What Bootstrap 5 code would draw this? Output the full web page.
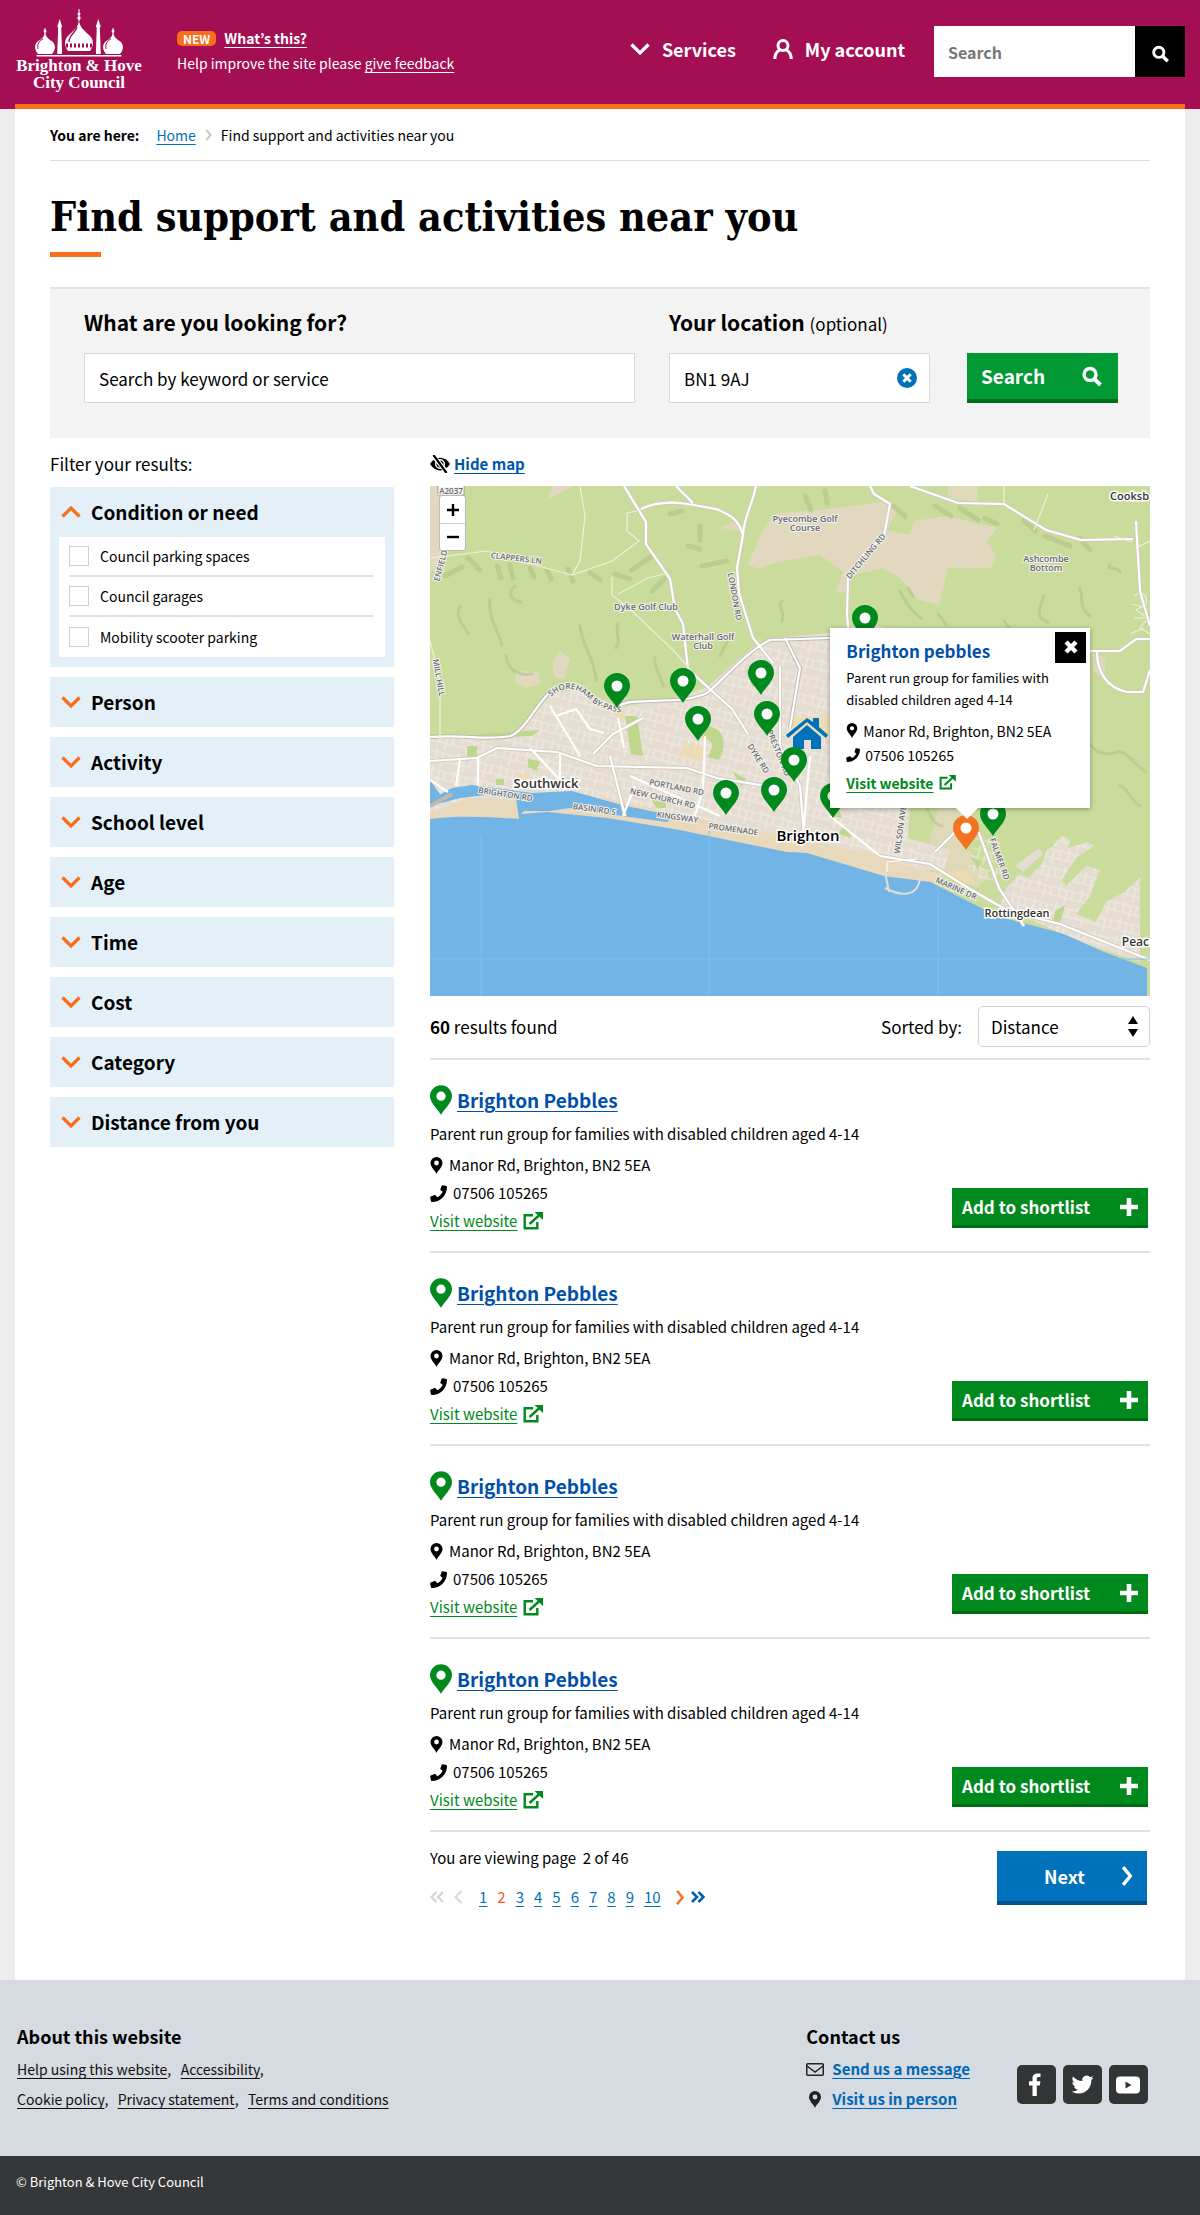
<!DOCTYPE html>
<html lang="en">
<head>
<meta charset="utf-8">
<meta name="viewport" content="width=device-width, initial-scale=1">
<title>Find support and activities near you - Brighton &amp; Hove City Council</title>
<link rel="stylesheet" href="https://cdn.jsdelivr.net/npm/bootstrap@5.3.0/dist/css/bootstrap.min.css">
<style>
:root{--brand:#a30f52;--orange:#f96e1a;--green:#00891c;--blue:#0071bb;--navy:#004fa8;--rule:#dcdcdc}
body{font-family:"Noto Sans CJK JP","Open Sans",sans-serif;font-size:17px;line-height:24px;color:#000;background:#ececec}
a{text-underline-offset:3px;text-decoration-thickness:1px}
svg{flex:none}
.fs-s{font-size:14px}.fs-m{font-size:15px}.fs-b{font-size:17px}.fs-l{font-size:18px}.fs-xl{font-size:21px}
.site-head{background:var(--brand);color:#fff;padding:9px 15px 0}
.site-head a{color:#fff}
.head-row{min-height:95px}
.head-bar{height:5px;background:var(--orange)}
.logo-link{width:128px;text-align:center;white-space:nowrap;text-decoration:none;font:700 17px/17px "Liberation Serif",serif}
.head-side{padding-top:17px}
.notice{margin-left:34px;line-height:25px}
.new-tag{background:var(--orange);border-radius:5px;font-size:12px;line-height:15px;padding:0 6px;font-weight:700}
.head-nav{gap:37px;padding-top:28px;margin-right:29px;line-height:24px}
.head-search input{width:201px;height:51px;border:0;border-radius:0;padding:0 14px;font-size:16px;font-weight:700}
.head-search input::placeholder{color:#777}
.head-search button{width:50px;background:#000;border:0;color:#fff}
.page{background:#fff;margin:0 15px;padding:0 35px 71px}
.crumbs{padding:14px 0 13px;border-bottom:1px solid var(--rule);gap:9px}
.crumbs a{color:var(--blue)}
h1{font:700 41px/56px "DejaVu Serif Condensed","DejaVu Serif",serif;margin:28px 0 0}
.title-bar{width:51px;height:5px;background:var(--orange);margin-top:7px}
.finder{margin-top:30px;background:#f3f3f3;border-top:2px solid #e1e1e1;padding:17px 32px 35px 34px;gap:34px}
.finder label{height:32px;line-height:32px;margin-bottom:15px;font-weight:700}
.finder .form-control{height:50px;border:1px solid #d9d9d9;border-radius:0;font-size:17px;color:#000;padding:0 14px}
.finder .form-control::placeholder{color:#000;opacity:1}
.col-key{flex:1 1 550px}.col-loc{flex:0 1 261px}
.clear-btn{position:absolute;right:13px;top:15px;border:0;background:none;padding:0;line-height:0}
.btn-find{width:151px;height:50px;background:#093;border:0;border-bottom:4px solid #006f1a;border-radius:0;color:#fff;font-weight:700;font-size:19px;padding:0 16px 0 14px;margin-left:3px}
.main-cols{padding-top:14px;gap:36px}
.side-col{flex:0 0 344px}
.side-title{margin-bottom:11px}
.panel{background:#e3f0f8;margin-bottom:10px;padding:0 9px}
.panel-btn{height:50px;border:0;background:none;padding:0 2px;font-weight:700;font-size:19px;gap:10px;width:100%;text-align:left}
.panel.open{padding-bottom:10px}
.checks{background:#fff;padding:0 12px 0 10px}
.check-line{height:40px;gap:11px;border-bottom:2px solid #e1e1e1}
.check-line:last-child{border:0}
.check-line .form-check-input{width:20px;height:20px;border:1px solid #d2d2d2;border-radius:0;margin:0}
.map-toggle{color:#0055a8;font-size:15px}
.map-box{margin-top:10px}
.map-box>svg{display:block;width:100%;height:auto}
.popup{position:absolute;left:55.6%;top:27.8%;width:260px;height:180px;background:#fff;padding:11px 16px;box-shadow:0 1px 5px rgba(0,0,0,.35)}
.popup::after{content:"";position:absolute;left:126px;top:100%;border:11px solid transparent;border-top-color:#fff;border-bottom:0}
.popup h2{font-size:17px;line-height:24px;color:var(--navy);font-weight:700;margin-bottom:4px}
.popup p{font-size:13px;line-height:22px;margin-bottom:0}
.popup .fact{font-size:14px;line-height:24px;gap:5px}
.popup-close{position:absolute;right:4px;top:4px;width:31px;height:31px;background:#000;border:0;padding:0;line-height:0}
.zoomer{position:absolute;left:9px;top:9px;width:27px;border:1px solid #bbb;border-radius:3px;background:#fff}
.zoomer button{height:27px;border:0;background:none;padding:0;line-height:0}
.zoomer button+button{border-top:1px solid #ccc}
.green-link{color:var(--green)}
.sort-row{padding:10px 0 11px}
.sort-row select{width:172px;height:41px;border:1px solid #d2d2d2;border-radius:5px;appearance:none;background:none;padding:0 12px;font-size:17px;color:#000}
.sort-arrows{position:absolute;right:12px;top:10px;pointer-events:none}
.result{border-top:2px solid #e1e1e1;height:193px;padding:24px 2px 0 0}
.result h3{font-size:19px;line-height:32px;font-weight:700;margin:0;gap:5px}
.result h3 a{color:var(--navy)}
.result p{line-height:28px;margin:4px 0 3px}
.fact{line-height:28px;gap:6px}
.btn-add{width:196px;height:40px;background:var(--green);border:0;border-bottom:3px solid #006d12;border-radius:0;color:#fff;font-weight:700;font-size:17px;padding:0 10px;margin-top:104px}
.pager-row{border-top:2px solid #e1e1e1;padding:14px 3px 0 0}
.pager{gap:10px;margin-top:15px}
.pager a{color:var(--blue)}
.pager .current{color:#f4581a}
.pager-prev{margin-right:6px}
.pager-next{gap:6px;margin-left:4px}
.btn-next{width:150px;height:54px;background:var(--blue);border:0;border-bottom:4px solid #00528c;border-radius:0;color:#fff;font-weight:700;font-size:18px;padding:0 14px 0 47px;margin-top:5px}
.foot{background:#d6dae1;padding:42px 52px 34px 17px;min-height:176px}
.foot h2{font-size:18px;line-height:28px;font-weight:700;margin:0 0 4px}
.foot li,.foot p{line-height:30px;margin:0}
.foot a.plain{color:#111}
.foot a.strong-link{color:#0068b5;font-weight:700}
.contact-col{margin-right:47px}
.social{gap:7px;margin-top:43px}
.social a{display:block;line-height:0}
.foot-end{background:#363738;color:#fff;padding:14px 16px 22px;line-height:24px;font-size:13px}
.map-label{font-family:"Open Sans","Noto Sans",sans-serif;fill:#666a72;stroke:#f4f2ea;stroke-width:2;paint-order:stroke;font-size:9px;font-weight:600;text-anchor:middle}
.road-label{font-size:8px}
.map-town{font-family:"Open Sans","Noto Sans",sans-serif;fill:#333;stroke:#fff;stroke-width:3;paint-order:stroke;font-weight:600;text-anchor:middle}
</style>
<script src="https://cdn.jsdelivr.net/npm/bootstrap@5.3.0/dist/js/bootstrap.bundle.min.js"></script>
</head>
<body>
<svg width="0" height="0" class="position-absolute" aria-hidden="true">
 <symbol id="pin" viewBox="0 0 26 35"><path fill="currentColor" fill-rule="evenodd" d="M13 35C10 29 0 21 0 13a13 13 0 0 1 26 0c0 8-10 16-13 22zM13 7.500a5.500 5.500 0 1 0 0 11 5.500 5.500 0 0 0 0-11z"/></symbol>
 <symbol id="mappin" viewBox="0 0 26 35"><path fill="currentColor" d="M13 35C10 29 0 21 0 13a13 13 0 0 1 26 0c0 8-10 16-13 22z"/><circle cx="13" cy="13" r="5.500" fill="#fff"/></symbol>
 <symbol id="marker" viewBox="0 0 12 17"><path fill="currentColor" fill-rule="evenodd" d="M6 17C5 14 0 10 0 6a6 6 0 0 1 12 0c0 4-5 8-6 11zM6 3.600a2.400 2.400 0 1 0 0 4.800 2.400 2.400 0 0 0 0-4.800z"/></symbol>
 <symbol id="phone" viewBox="0 0 16 16"><path fill="currentColor" d="M12 .2 15.300.9C15.800 1 16 1.300 16 1.800 16 9.600 9.700 16 1.800 16 1.300 16 1 15.800.9 15.300L.2 12c-.1-.5.1-.9.5-1.100l3.500-1.500c.4-.2.800-.1 1.100.300l1.500 1.800c2.300-1.100 4.100-2.900 5.100-5.100L10 5c-.3-.3-.4-.7-.2-1.100L11 .7c.1-.4.500-.6 1-.5z"/></symbol>
 <symbol id="ext" viewBox="0 0 20 18"><path fill="none" stroke="currentColor" stroke-width="2.400" d="M10 3.200H1.700v13.100h12.600V10M6.500 12 17 2.500"/><path fill="currentColor" d="M11.500 0H20v8z"/></symbol>
 <symbol id="down" viewBox="0 0 20 12"><path fill="none" stroke="currentColor" stroke-width="3.200" d="m1.500 1.500 8.500 8.500 8.500-8.500"/></symbol>
 <symbol id="up" viewBox="0 0 20 12"><path fill="none" stroke="currentColor" stroke-width="3.200" d="m1.500 10.500 8.500-8.500 8.500 8.500"/></symbol>
 <symbol id="right" viewBox="0 0 10 18"><path fill="none" stroke="currentColor" stroke-width="3" d="m1.500 1 6.500 8-6.500 8"/></symbol>
 <symbol id="twice" viewBox="0 0 14 12"><path fill="none" stroke="currentColor" stroke-width="2.600" d="m1 1 5 5-5 5M7.500 1l5 5-5 5"/></symbol>
 <symbol id="lens" viewBox="0 0 20 20"><circle cx="8" cy="8" r="6" fill="none" stroke="currentColor" stroke-width="3.400"/><path stroke="currentColor" stroke-width="4" d="m12.300 12.300 6.200 6.200"/></symbol>
 <symbol id="plus" viewBox="0 0 18 18"><path stroke="currentColor" stroke-width="4.600" d="M9 0v18M0 9h18"/></symbol>
</svg>

<header class="site-head">
 <div class="head-row d-flex align-items-start">
  <a href="#" class="logo-link d-block">
   <svg width="90" height="48" viewBox="0 0 90 48" class="d-block mx-auto" aria-hidden="true">
    <g fill="#fff">
     <path d="M2.500 46h85v1.500h-85zM4 45C-1 39 1 33 6 31c3-2 5-5 5-9 0 4 2 7 5 9 5 2 7 8 2 14zM72 45c-5-6-3-12 2-14 3-2 5-5 5-9 0 4 2 7 5 9 5 2 7 8 2 14z"/>
     <path d="M10.500 19h1v6h-1zM78.500 19h1v6h-1z"/><circle cx="11" cy="22" r="1.500"/><circle cx="79" cy="22" r="1.500"/>
     <path d="M24.200 18h3l1 27h-5zM25.700 10l1.600 5h-3.200zM62.800 18h3l1 27h-5zM64.300 10l1.600 5h-3.200z"/><circle cx="25.700" cy="17" r="2.300"/><circle cx="64.300" cy="17" r="2.300"/>
     <path d="M44.500 0h1v12h-1z"/><circle cx="45" cy="5" r="1.500"/><circle cx="45" cy="9" r="1.700"/>
     <path d="M45 10c0 8-5 11-10 16-5 4-5 11-1 16h22c4-5 4-12-1-16-5-5-10-8-10-16z"/>
    </g>
    <g fill="none" stroke="#a30f52"><path d="M43 18c-1 5-8 8-8 15M32 43h26" stroke-width="1.300"/><path d="M32 36.500h27" stroke-width="4" stroke-dasharray="2 2"/><path d="M28 44.500h34" stroke-width="3" stroke-dasharray="1.500 1.500"/><path d="M9 30c-4 2-6 5-5 10M77 30c-4 2-6 5-5 10" stroke-width="1"/></g>
   </svg>
   <span class="d-block">Brighton &amp; Hove</span><span class="d-block">City Council</span>
  </a>
  <div class="head-side notice fs-s">
   <div class="d-flex align-items-center gap-2"><span class="new-tag">NEW</span><a href="#" class="fw-bold">What’s this?</a></div>
   <div>Help improve the site please <a href="#">give feedback</a></div>
  </div>
  <nav class="head-nav d-flex ms-auto fs-l fw-bold" aria-label="Main">
   <a href="#" class="d-flex align-items-center gap-2 text-decoration-none"><svg width="20" height="12" class="me-1"><use href="#down"/></svg>Services</a>
   <a href="#" class="d-flex align-items-center gap-2 text-decoration-none"><svg width="20" height="20" viewBox="0 0 20 20" class="me-1" fill="none" stroke="#fff" stroke-width="3"><circle cx="10" cy="6.500" r="5"/><path d="M1.800 20c0-5 2.500-8 5.500-9.500M18.200 20c0-5-2.500-8-5.500-9.500"/></svg>My account</a>
  </nav>
  <form class="head-side head-search d-flex">
   <input type="search" aria-label="Search the site" placeholder="Search"><button type="button" aria-label="Search"><svg width="17" height="18"><use href="#lens"/></svg></button>
  </form>
 </div>
 <div class="head-bar"></div>
</header>

<main class="page">
 <nav class="crumbs d-flex align-items-center fs-s" aria-label="Breadcrumb">
  <strong class="me-2">You are here:</strong><a href="#">Home</a>
  <svg width="7" height="12" color="#c8c8c8"><use href="#right"/></svg><span>Find support and activities near you</span>
 </nav>
 <h1>Find support and activities near you</h1>
 <div class="title-bar"></div>

 <form class="finder d-flex align-items-end">
  <div class="col-key"><label for="kw" class="d-block fs-xl">What are you looking for?</label><input id="kw" class="form-control" placeholder="Search by keyword or service"></div>
  <div class="col-loc"><label for="loc" class="d-block fs-xl">Your location <span class="fs-b fw-normal">(optional)</span></label>
   <div class="position-relative"><input id="loc" class="form-control" value="BN1 9AJ"><button type="button" class="clear-btn" aria-label="Clear location"><svg width="20" height="20" viewBox="0 0 20 20"><circle cx="10" cy="10" r="10" fill="#0071bb"/><path d="m6.300 6.300 7.400 7.400m0-7.400-7.400 7.400" stroke="#fff" stroke-width="3"/></svg></button></div></div>
  <button type="button" class="btn-find d-flex align-items-center justify-content-between">Search<svg width="20" height="21"><use href="#lens"/></svg></button>
 </form>

 <div class="main-cols d-flex">
  <aside class="side-col">
   <div class="side-title">Filter your results:</div>
   <div class="panel open mt-0">
    <button class="panel-btn d-flex align-items-center"><svg width="20" height="12" color="#f96e1a"><use href="#up"/></svg>Condition or need</button>
    <div class="checks fs-s">
     <div class="check-line d-flex align-items-center"><input class="form-check-input" type="checkbox" id="c1"><label for="c1">Council parking spaces</label></div>
     <div class="check-line d-flex align-items-center"><input class="form-check-input" type="checkbox" id="c2"><label for="c2">Council garages</label></div>
     <div class="check-line d-flex align-items-center"><input class="form-check-input" type="checkbox" id="c3"><label for="c3">Mobility scooter parking</label></div>
    </div>
   </div>
   <div class="panel"><button class="panel-btn d-flex align-items-center"><svg width="20" height="12" color="#f96e1a"><use href="#down"/></svg>Person</button></div>
   <div class="panel"><button class="panel-btn d-flex align-items-center"><svg width="20" height="12" color="#f96e1a"><use href="#down"/></svg>Activity</button></div>
   <div class="panel"><button class="panel-btn d-flex align-items-center"><svg width="20" height="12" color="#f96e1a"><use href="#down"/></svg>School level</button></div>
   <div class="panel"><button class="panel-btn d-flex align-items-center"><svg width="20" height="12" color="#f96e1a"><use href="#down"/></svg>Age</button></div>
   <div class="panel"><button class="panel-btn d-flex align-items-center"><svg width="20" height="12" color="#f96e1a"><use href="#down"/></svg>Time</button></div>
   <div class="panel"><button class="panel-btn d-flex align-items-center"><svg width="20" height="12" color="#f96e1a"><use href="#down"/></svg>Cost</button></div>
   <div class="panel"><button class="panel-btn d-flex align-items-center"><svg width="20" height="12" color="#f96e1a"><use href="#down"/></svg>Category</button></div>
   <div class="panel"><button class="panel-btn d-flex align-items-center"><svg width="20" height="12" color="#f96e1a"><use href="#down"/></svg>Distance from you</button></div>
  </aside>

  <section class="flex-grow-1">
   <div class="d-flex align-items-center gap-1 fw-bold">
    <svg width="20" height="18" viewBox="0 0 20 18"><path d="M0 9c5-8.500 15-8.500 20 0-5 8.500-15 8.500-20 0z"/><circle cx="10" cy="9" r="4.300" fill="none" stroke="#fff" stroke-width="1.400"/><path d="m3 .500 14 17" stroke="#fff" stroke-width="4.500"/><path d="m3.500 0 13 18" stroke="#000" stroke-width="2.200"/></svg>
    <a href="#" class="map-toggle">Hide map</a></div>
   <div class="map-box position-relative">
    <svg viewBox="0 0 720 510" role="img" aria-label="Map of Brighton and Hove">
     <defs><clipPath id="frame"><path d="M0 0h720v510H0z"/></clipPath>
      <pattern id="streets" width="22" height="18" patternUnits="userSpaceOnUse" patternTransform="rotate(14)"><path d="M0 4h22M0 12h12M5 0v12M12 4v14M18 4v8M12 12h10" stroke="#f6f1ea" stroke-opacity=".7" stroke-width="1.200" fill="none"/></pattern></defs>
     <g clip-path="url(#frame)">
     <path fill="#c9dc9b" d="M0 0h720v510H0z"/>
     <g fill="#e2d8c0">
      <path d="M0 0h14l-2 55-3 30H0zM347 27l43-3 63-8 14 8-10 20 23 5 4-14 33-5 50 12-10 13 9 16-5 11h-43l-9 37-22-6-17-21-17-10-30 7-7 18-10-1 7-20-23-17-30 5-20 4-10 5-12-4 15-36zM130 165l10 8-6 20-10-2-2-14zM86 185l22 1 3 12-16 4-10-6zM143 0h-20l-6 14z"/>
      <path d="M290 42l18-8 5 12zM518 0h30v16l-30-4zM662 168l14 4-2 20-10-6zM508 322h26l-4 30 16 20 14 20-14 8-30-12-20-20z" opacity=".8"/>
     </g>
     <g fill="none" stroke="#aebf83" stroke-width="5" stroke-linecap="round" opacity=".5">
      <path d="m38 72 12 12M67 80l4 12M80 79l3 13M100 82l4 9M117 84l4 9M138 83l5 12M160 87l10 7M202 84l20-14M185 88l15 5M15 90l17-9M222 105l12-12M240 28l12-3M270 40v14M258 60l12 3M272 80l25-5M505 20l16 10M530 22l18 12M555 32l12 6M594 35l12 10M615 50l25 10M650 52l10 12M375 10l6 14M395 5l2 12M463 20l12 10"/>
      <path stroke-width="3" d="M30 120c-6 12 4 18 8 28M60 113c-2 20 8 30 12 46M85 100c-8 8-4 14 6 16M150 140c2 20 14 30 16 54M188 138c-4 12 4 14-2 24M225 172c-2 10 6 16 8 28M76 170c2 14 12 20 26 18M470 105c6 14 14 22 22 28M650 102c4 14-2 18 10 28M614 110c-6 16-8 22 4 26M574 135l10 14M560 150l-8 12M508 128l8 10M680 78c-4 8 8 2 10 8M478 102l5 8M352 115c-6 6 4 10 0 20M300 150l-10 20M658 256c8 12 20 14 28 10 8-4 20 14 30 20M690 300c8 2 8 12 20 20M496 320c4 8 6 18 16 20M622 360c10 20 6 10 14 24"/>
     </g>
     <path fill="#e6ddd2" d="M0 251c30-6 60 4 87-1l26-33 10-10 27-4 37 18 53-7 37-13 46-40 17-9 60-5 40-10 60 20 4 80-24 77-2 38 42 12-6 20H0z"/>
     <path fill="url(#streets)" d="M0 253c30-6 60 4 87-1l26-33 10-10 27-4 37 18 53-7 37-13 46-40 17-9 60-5 40-10 60 20 4 80-24 77-2 38 42 12-6 20H0z"/>
     <path fill="#e6ddd2" d="m570 420 6-18 14-14 8 4 14-14 4-12 16-16 8 4-2 8 20-6 6 4-18 12-14 22 4 6 20-20 14 4-10 26-14 18 20 8 10-20 18-10 16-14v84l-60-20zM585 380l24-18 4 6-20 18z"/>
     <path fill="url(#streets)" d="m570 420 6-18 14-14 8 4 14-14 4-12 16-16 8 4-2 8 20-6 6 4-18 12-14 22 4 6 20-20 14 4-10 26-14 18 20 8 10-20 18-10 16-14v84l-60-20zM545 350l16 4 12 38-16 8-20-20z"/>
     <g fill="none" stroke="#eef0d8" stroke-width="1.200"><path d="M704 110c8-6 14 0 12 8l-10 6 12 8-8 10 10 6M702 118l14 4M704 132h14M700 148l14-6M575 206l20-22M586 212l16-24"/></g>
     <g fill="#bfd78c"><path d="M50 248l60-4-8 6-50 2zM195 230l6 38 12 2-6-40zM275 240c25 0 20 30 13 34l-10-3c4-10 8-14-5-20zM37 260h10v14H37zM98 273l12 2-3 10-9-4zM66 293h8v6h-8zM222 314h14v8h-10zM302 285l14 8-4 8zM315 183l16 8-8 10zM400 330l8-10 4 12zM408 348l6-8 8 12zM625 425l10-6-4 16-8 2zM540 370l10 6-2 8z"/></g>
     <g fill="#ecdcae" opacity=".8"><path d="M255 256l20 6-4 14-22-6zM88 287h12v8l-10 2zM362 230h40v18l-20 8-20-8zM185 222h8l3 10-8 2zM506 386l30-2 14 18-20-6z"/></g>
     <path fill="#e8d9bc" d="M0 326l40-14 50 2 24 4 60-6 120 26 90 18 60 12 40 14 30 6-2 8H0z"/>
     <path fill="#72b4e6" d="M0 333c30-4 60-2 89 0l-3-20-30-4-26 3-30 8v-6l22-12 20-3 60 8 40-2 50 14 33 7 22 2-10 8-60-8-37-6-20 3-26 0-3 3 26-2 60 6 73 12 67 14 40 8 20 1 30 9 47 14 46 6 67 34 67 18 40 18 43 16v32H0z"/>
     <path fill="#72b4e6" d="M0 294l14 20L0 320z"/>
     <g fill="none" stroke="#bfb8ae" stroke-width="4"><path d="M0 251c35-3 55 4 80-1 15-5 25-30 40-44M187 221c15-12 60 0 90-14 15-12 40-42 63-53M0 320l22-12M340 154l60-2M355 152l15 30-10 60"/></g>
     <g fill="none" stroke="#d2cbc0" stroke-width="4"><path d="M194 0l22 36v22l24 35 5 30 8 15 5 45 24 22 20 18 16 25M211 23c25-12 50-4 75 0 15 6 22 10 27 26l-6 33 2 25 14 45 20 25M246 0l17 17M326 0c-4 20-12 30-13 49M440 0l4 8 16 10-6 32-22 20-14 20-1 40 2 20M480 0l48 17 46 1 42 26 35 10 52-1M706 35l4 70 10 35M660 165l30 0 16-12 14 0M667 166c0 20 10 36 30 40h16l7-22M505 366l24-24 20 5 20 55 25 38M450 370l50 8 40 25 40 23 50 12 90 36M0 275l47-3 20-10 60 4 40 14 90 2 30 10 50 8M163 268l20-20 30-16M180 270l15 60M350 180v80l20 40 4 50"/></g>
     <g fill="none" stroke="#fff" stroke-width="2.200"><path d="M194 0l22 36v22l24 35 5 30 8 15 5 45 24 22 20 18 16 25M211 23c25-12 50-4 75 0 15 6 22 10 27 26l-6 33 2 25 14 45 20 25M246 0l17 17M326 0c-4 20-12 30-13 49M440 0l4 8 16 10-6 32-22 20-14 20-1 40 2 20M480 0l48 17 46 1 42 26 35 10 52-1M706 35l4 70 10 35M660 165l30 0 16-12 14 0M667 166c0 20 10 36 30 40h16l7-22M505 366l24-24 20 5 20 55 25 38M450 370l50 8 40 25 40 23 50 12 90 36M0 275l47-3 20-10 60 4 40 14 90 2 30 10 50 8M163 268l20-20 30-16M180 270l15 60M350 180v80l20 40 4 50M0 251c35-3 55 4 80-1 15-5 25-30 40-44M187 221c15-12 60 0 90-14 15-12 40-42 63-53l60-2M355 152l15 30-10 60M48 272v28M100 262l30 32M130 268v28M30 274l-4 26M205 300l-12 30M275 250l-2 54-10 32M120 220l30 50M200 290l90 40M400 330l50 40M380 270l-8 90M0 294l18 12M126 230l20-7 14 20 14 4M188 232l6 30"/></g>
     <g fill="none" stroke="#f1eedb" stroke-width="1.200"><path d="M150 0l5 30-5 45-8 14-45-12-40-12-40 5L0 72M142 89l40-14 27-20-12-10v-18l14-3M182 91v18l20 16 40 38 18 20M188 108l30-16 20-5M0 155l10 40v60M574 0v18M604 44l14-36M684 50l18 6M720 55l-12 6"/></g>
     <g fill="none" stroke="#e6ddd2"><path stroke-width="2" d="M455 386l4 20M490 392c-2 20-20 18-35 10"/><path stroke="#fff" stroke-width="1" d="M457 386v-10l30-3"/></g>
     <path d="M51 350v160M279 345v165M508 400v110M0 473h720" stroke="#82bfea" stroke-width="1"/>

     <g class="map-label">
      <text x="375" y="36">Pyecombe Golf</text><text x="375" y="45">Course</text>
      <text x="216" y="124">Dyke Golf Club</text>
      <text x="273" y="154">Waterhall Golf</text><text x="273" y="163">Club</text>
      <text x="616" y="76">Ashcombe</text><text x="616" y="85">Bottom</text>
     </g>
     <path id="bypass" fill="none" d="M121 211c14-14 30-8 40 4q14 12 40 12"/>
     <g>
      <text class="map-label road-label" transform="translate(86 75) rotate(7)">CLAPPERS LN</text>
      <text class="map-label road-label" transform="translate(302 111) rotate(80)">LONDON RD</text>
      <text class="map-label road-label" transform="translate(438 72) rotate(-50)">DITCHLING RD</text>
      <text class="map-label road-label" transform="translate(6 192) rotate(80)">MILL HILL</text>
      <text class="map-label road-label" transform="translate(15 74) rotate(-75)">ENFIELD RD</text>
      <text class="map-label road-label" style="text-anchor:start"><textPath href="#bypass">SHOREHAM BY-PASS</textPath></text>
      <text class="map-label road-label" transform="translate(75 311) rotate(9)">BRIGHTON RD</text>
      <text class="map-label road-label" transform="translate(164 326) rotate(8)">BASIN RD S</text>
      <text class="map-label road-label" transform="translate(246 304) rotate(11)">PORTLAND RD</text>
      <text class="map-label road-label" transform="translate(232 315) rotate(13)">NEW CHURCH RD</text>
      <text class="map-label road-label" transform="translate(247 334) rotate(8)">KINGSWAY</text>
      <text class="map-label road-label" transform="translate(303 346) rotate(8)">PROMENADE</text>
      <text class="map-label road-label" transform="translate(326 274) rotate(58)">DYKE RD</text>
      <text class="map-label road-label" transform="translate(346 268) rotate(68)">PRESTON RD</text>
      <text class="map-label road-label" transform="translate(473 344) rotate(-82)">WILSON AVE</text>
      <text class="map-label road-label" transform="translate(567 374) rotate(70)">FALMER RD</text>
      <text class="map-label road-label" transform="translate(525 405) rotate(24)">MARINE DR</text>
     </g>
     <path d="M8-5h26V9H8z" fill="#fff" stroke="#999"/><text class="map-label road-label" x="21" y="8">A2037</text>
     <g class="map-town"><text x="116" y="302" font-size="13">Southwick</text><text x="587" y="431" font-size="11">Rottingdean</text><text x="719" y="14" font-size="11" style="text-anchor:end">Cooksb</text><text x="719" y="460" font-size="12" style="text-anchor:end">Peac</text></g>
     <g class="map-town" style="fill:#000"><text x="378" y="355" font-size="15">Brighton</text></g>
     <g fill="#0071bb"><path d="m358 252-2-3 21-17 6 4v-4h6v9l9 8-2 3-19-16z"/><path d="m377 239 14 12v12h-10v-9h-7v9h-11v-12z"/></g>
     <g color="#00891c">
      <use href="#mappin" width="26" height="35" x="174" y="187"/><use href="#mappin" width="26" height="35" x="240" y="182"/><use href="#mappin" width="26" height="35" x="255" y="220"/><use href="#mappin" width="26" height="35" x="318" y="174"/><use href="#mappin" width="26" height="35" x="324" y="215"/><use href="#mappin" width="26" height="35" x="283" y="294"/><use href="#mappin" width="26" height="35" x="331" y="291"/><use href="#mappin" width="26" height="35" x="351" y="261"/><use href="#mappin" width="26" height="35" x="422" y="119"/><use href="#mappin" width="26" height="35" x="390" y="297"/><use href="#mappin" width="26" height="35" x="550" y="315"/>
     </g>
     <use href="#mappin" width="26" height="35" x="523" y="329" color="#f47321"/>
     </g>
    </svg>
    <div class="zoomer d-flex flex-column"><button type="button" aria-label="Zoom in"><svg width="12" height="12"><path d="M6 0v12M0 6h12" stroke="#000" stroke-width="2.400"/></svg></button><button type="button" aria-label="Zoom out"><svg width="12" height="12"><path d="M0 6h12" stroke="#000" stroke-width="2.400"/></svg></button></div>
    <div class="popup">
     <button type="button" class="popup-close" aria-label="Close"><svg width="14" height="14" viewBox="0 0 14 14"><path d="m2 2 10 10m0-10L2 12" stroke="#fff" stroke-width="4.400"/></svg></button>
     <h2>Brighton pebbles</h2>
     <p>Parent run group for families with<br>disabled children aged 4-14</p>
     <div class="fact d-flex align-items-center mt-2"><svg width="12" height="15"><use href="#marker"/></svg>Manor Rd, Brighton, BN2 5EA</div>
     <div class="fact d-flex align-items-center"><svg width="14" height="14"><use href="#phone"/></svg>07506 105265</div>
     <div class="fact d-flex align-items-center mt-1 green-link"><a href="#" class="green-link fw-bold">Visit website</a><svg width="17" height="15"><use href="#ext"/></svg></div>
    </div>
   </div>

   <div class="sort-row d-flex align-items-center">
    <div><strong>60</strong> results found</div>
    <label for="sort" class="ms-auto me-3">Sorted by:</label>
    <div class="position-relative"><select id="sort"><option>Distance</option></select><svg class="sort-arrows" width="10" height="21"><path d="m5 0 5 8H0zM0 13h10l-5 8z"/></svg></div>
   </div>

   <article class="result d-flex justify-content-between"><div>
     <h3 class="d-flex align-items-center"><svg width="22" height="30" color="#00891c"><use href="#pin"/></svg><a href="#">Brighton Pebbles</a></h3>
     <p class="fs-m">Parent run group for families with disabled children aged 4-14</p>
     <div class="fact fs-m d-flex align-items-center"><svg width="13" height="17"><use href="#marker"/></svg>Manor Rd, Brighton, BN2 5EA</div>
     <div class="fact fs-m d-flex align-items-center"><svg width="17" height="17"><use href="#phone"/></svg>07506 105265</div>
     <div class="fact fs-m d-flex align-items-center green-link"><a href="#" class="green-link">Visit website</a><svg width="20" height="18"><use href="#ext"/></svg></div></div>
    <button type="button" class="btn-add d-flex align-items-center justify-content-between">Add to shortlist<svg width="18" height="18"><use href="#plus"/></svg></button></article>
   <article class="result d-flex justify-content-between"><div>
     <h3 class="d-flex align-items-center"><svg width="22" height="30" color="#00891c"><use href="#pin"/></svg><a href="#">Brighton Pebbles</a></h3>
     <p class="fs-m">Parent run group for families with disabled children aged 4-14</p>
     <div class="fact fs-m d-flex align-items-center"><svg width="13" height="17"><use href="#marker"/></svg>Manor Rd, Brighton, BN2 5EA</div>
     <div class="fact fs-m d-flex align-items-center"><svg width="17" height="17"><use href="#phone"/></svg>07506 105265</div>
     <div class="fact fs-m d-flex align-items-center green-link"><a href="#" class="green-link">Visit website</a><svg width="20" height="18"><use href="#ext"/></svg></div></div>
    <button type="button" class="btn-add d-flex align-items-center justify-content-between">Add to shortlist<svg width="18" height="18"><use href="#plus"/></svg></button></article>
   <article class="result d-flex justify-content-between"><div>
     <h3 class="d-flex align-items-center"><svg width="22" height="30" color="#00891c"><use href="#pin"/></svg><a href="#">Brighton Pebbles</a></h3>
     <p class="fs-m">Parent run group for families with disabled children aged 4-14</p>
     <div class="fact fs-m d-flex align-items-center"><svg width="13" height="17"><use href="#marker"/></svg>Manor Rd, Brighton, BN2 5EA</div>
     <div class="fact fs-m d-flex align-items-center"><svg width="17" height="17"><use href="#phone"/></svg>07506 105265</div>
     <div class="fact fs-m d-flex align-items-center green-link"><a href="#" class="green-link">Visit website</a><svg width="20" height="18"><use href="#ext"/></svg></div></div>
    <button type="button" class="btn-add d-flex align-items-center justify-content-between">Add to shortlist<svg width="18" height="18"><use href="#plus"/></svg></button></article>
   <article class="result d-flex justify-content-between"><div>
     <h3 class="d-flex align-items-center"><svg width="22" height="30" color="#00891c"><use href="#pin"/></svg><a href="#">Brighton Pebbles</a></h3>
     <p class="fs-m">Parent run group for families with disabled children aged 4-14</p>
     <div class="fact fs-m d-flex align-items-center"><svg width="13" height="17"><use href="#marker"/></svg>Manor Rd, Brighton, BN2 5EA</div>
     <div class="fact fs-m d-flex align-items-center"><svg width="17" height="17"><use href="#phone"/></svg>07506 105265</div>
     <div class="fact fs-m d-flex align-items-center green-link"><a href="#" class="green-link">Visit website</a><svg width="20" height="18"><use href="#ext"/></svg></div></div>
    <button type="button" class="btn-add d-flex align-items-center justify-content-between">Add to shortlist<svg width="18" height="18"><use href="#plus"/></svg></button></article>

   <div class="pager-row d-flex justify-content-between">
    <div>
     <div class="fs-m">You are viewing page&nbsp; 2 of 46</div>
     <nav class="pager fs-m d-flex align-items-center" aria-label="Pages">
      <svg width="14" height="12" viewBox="0 0 14 12" fill="none" stroke="#d2d2d2" stroke-width="2.200"><path d="M6.500 1l-5 5 5 5M13 1 8 6l5 5"/></svg>
      <svg width="9" height="14" viewBox="0 0 9 14" fill="none" stroke="#d8d8d8" stroke-width="2.200" class="pager-prev"><path d="M7.500 1l-6 6 6 6"/></svg>
      <a href="#">1</a><span class="current">2</span><a href="#">3</a><a href="#">4</a><a href="#">5</a><a href="#">6</a><a href="#">7</a><a href="#">8</a><a href="#">9</a><a href="#">10</a>
      <span class="pager-next d-flex align-items-center"><svg width="10" height="15" color="#f47321"><use href="#right"/></svg><svg width="14" height="12" color="#0061b0"><use href="#twice"/></svg></span>
     </nav>
    </div>
    <button type="button" class="btn-next d-flex align-items-center justify-content-between">Next<svg width="12" height="20"><use href="#right"/></svg></button>
   </div>
  </section>
 </div>
</main>

<footer>
 <div class="foot d-flex fs-m">
  <div><h2>About this website</h2>
   <p class="fs-s"><a href="#" class="plain">Help using this website</a>, &nbsp; <a href="#" class="plain">Accessibility</a>,</p>
   <p class="fs-s"><a href="#" class="plain">Cookie policy</a>, &nbsp; <a href="#" class="plain">Privacy statement</a>, &nbsp; <a href="#" class="plain">Terms and conditions</a></p></div>
  <div class="contact-col ms-auto"><h2>Contact us</h2>
   <p class="d-flex align-items-center gap-2"><svg width="18" height="13" viewBox="0 0 18 13" fill="none" stroke="#222" stroke-width="1.500"><rect x=".75" y=".75" width="16.500" height="11.500" rx="1"/><path d="M1 3l8 6 8-6"/></svg><a href="#" class="strong-link fs-m">Send us a message</a></p>
   <p class="d-flex align-items-center gap-2"><svg width="18" height="17" color="#222"><use href="#marker"/></svg><a href="#" class="strong-link fs-m">Visit us in person</a></p></div>
  <div class="social d-flex align-self-start">
   <a href="#" aria-label="Facebook"><svg width="39" height="39" viewBox="0 0 39 39"><rect width="39" height="39" rx="5" fill="#333436"/><path fill="#fff" d="M15.500 31V20.500H12V16.300h3.500v-3c0-3.400 2-4.900 5-4.900 1.400 0 2.600.1 3 .1v3.600h-2c-1.400 0-1.700.8-1.700 1.800v2.400h3.600l-.5 4.200h-3.100V31z"/></svg></a>
   <a href="#" aria-label="Twitter"><svg width="39" height="39" viewBox="0 0 39 39"><rect width="39" height="39" rx="5" fill="#333436"/><path fill="#fff" transform="translate(8.500 8.500) scale(.92)" d="M23.950 4.570a10 10 0 0 1-2.820.77 4.960 4.960 0 0 0 2.160-2.720c-.95.550-2 .95-3.130 1.180a4.920 4.920 0 0 0-8.380 4.480C7.690 8.090 4.070 6.130 1.640 3.160a4.820 4.820 0 0 0-.67 2.480c0 1.710.87 3.210 2.190 4.100a4.900 4.900 0 0 1-2.230-.62v.06a4.920 4.920 0 0 0 3.950 4.830 5 5 0 0 1-2.210.08 4.940 4.940 0 0 0 4.600 3.420A9.870 9.870 0 0 1 0 19.540a13.990 13.990 0 0 0 7.550 2.210c9.050 0 14-7.500 14-13.980 0-.21 0-.42-.02-.63a9.940 9.940 0 0 0 2.460-2.550z"/></svg></a>
   <a href="#" aria-label="YouTube"><svg width="39" height="39" viewBox="0 0 39 39"><rect width="39" height="39" rx="5" fill="#333436"/><rect x="7" y="11.500" width="24" height="17" rx="4" fill="#fff"/><path fill="#333436" d="m16.500 16.500 6 3.500-6 3.500z"/></svg></a>
  </div>
 </div>
 <div class="foot-end">© Brighton &amp; Hove City Council</div>
</footer>
</body>
</html>
